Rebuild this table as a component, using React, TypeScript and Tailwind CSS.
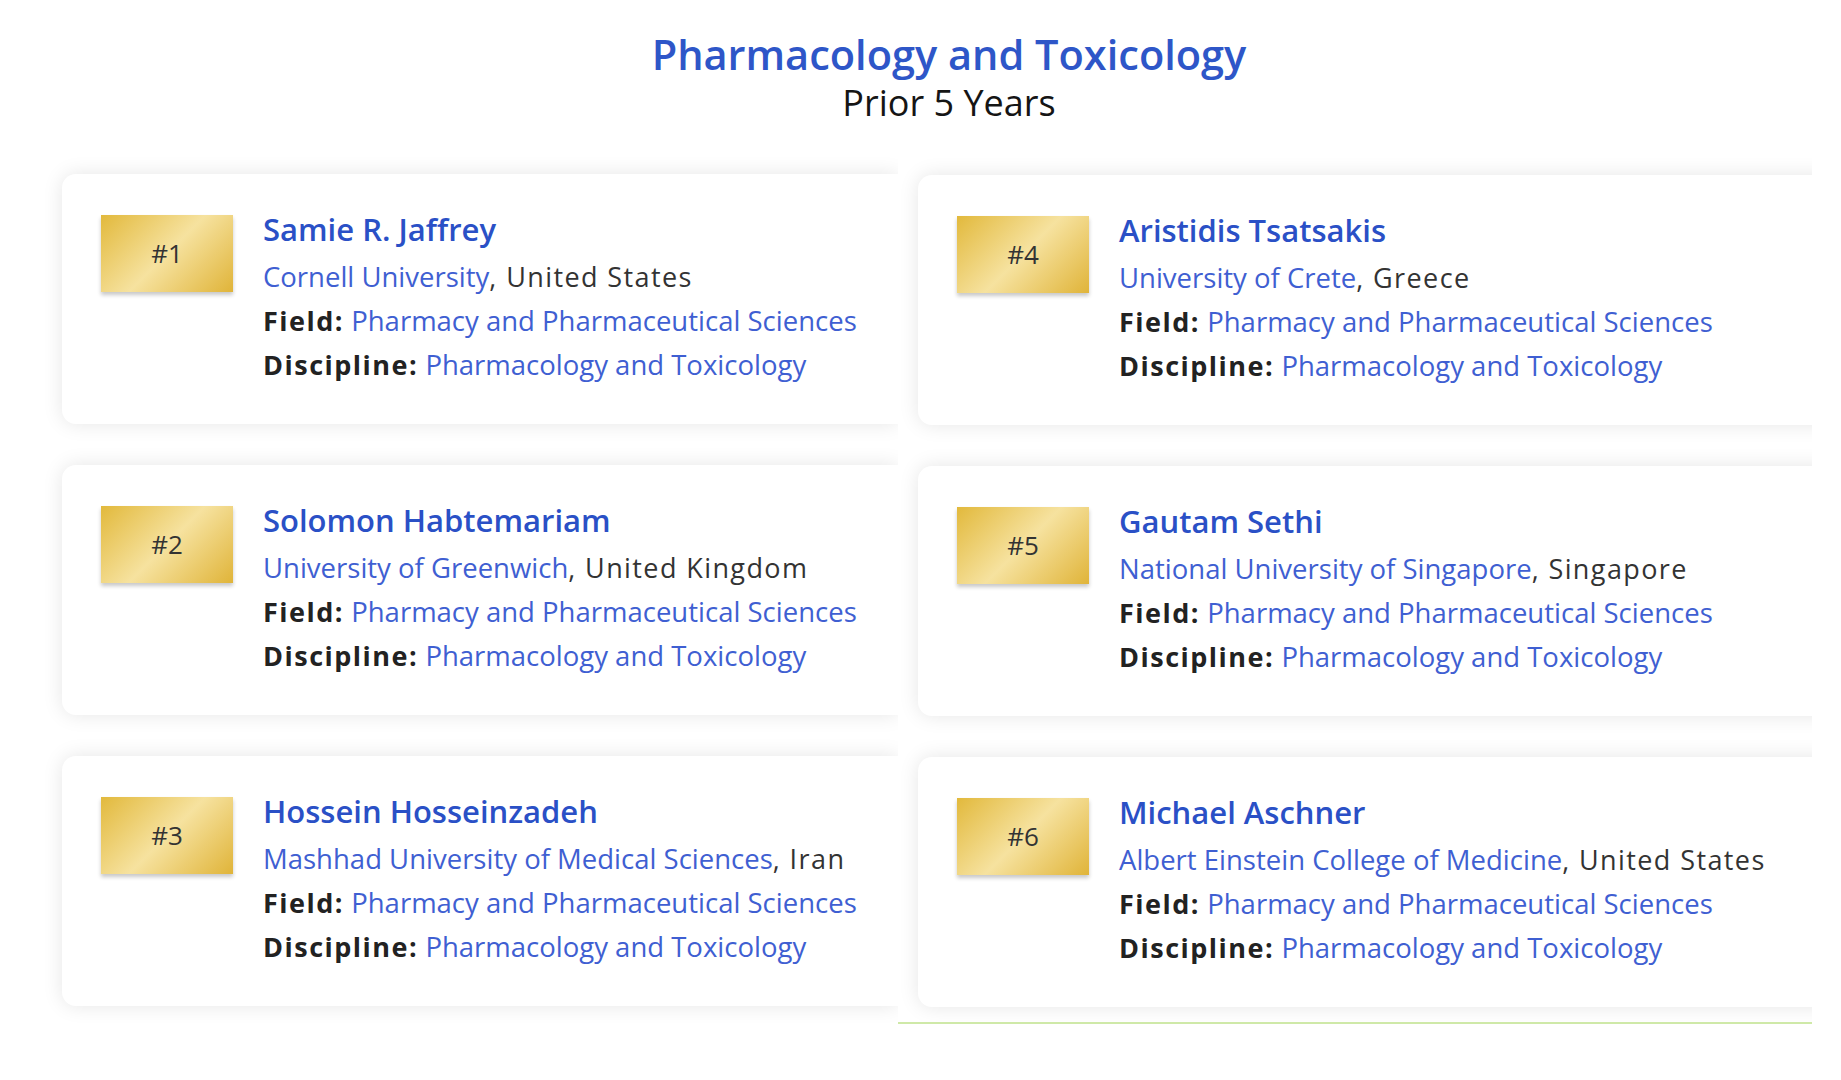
import React from "react";

type Item = { rank: number; name: string; uni: string; country: string };

const left: Item[] = [
  { rank: 1, name: "Samie R. Jaffrey", uni: "Cornell University", country: "United States" },
  { rank: 2, name: "Solomon Habtemariam", uni: "University of Greenwich", country: "United Kingdom" },
  { rank: 3, name: "Hossein Hosseinzadeh", uni: "Mashhad University of Medical Sciences", country: "Iran" },
];
const right: Item[] = [
  { rank: 4, name: "Aristidis Tsatsakis", uni: "University of Crete", country: "Greece" },
  { rank: 5, name: "Gautam Sethi", uni: "National University of Singapore", country: "Singapore" },
  { rank: 6, name: "Michael Aschner", uni: "Albert Einstein College of Medicine", country: "United States" },
];

function Card({ item, wide }: { item: Item; wide?: boolean }) {
  return (
    <div
      className={
        "flex h-[250px] shrink-0 rounded-l-[14px] bg-white shadow-[0_0_20px_rgba(0,0,0,0.1)] " +
        (wide ? "w-[1000px]" : "w-[836px]")
      }
    >
      <div className="pl-[39px] pt-[41px]">
        <div className="flex h-[77px] w-[132px] items-center justify-center bg-[linear-gradient(135deg,#e2b93c_0%,#f6e29f_50%,#e0b439_100%)] text-[26px] text-[#333] shadow-[0_3px_4px_rgba(0,0,0,0.22)]">
          #{item.rank}
        </div>
      </div>
      <div className="pl-[30px] pt-[35px]">
        <div className="h-[41px] whitespace-nowrap text-[31px] font-semibold leading-[41px] text-[#2a50c6]">
          {item.name}
        </div>
        <div className="mt-[5px] h-[44px] whitespace-nowrap text-[27.5px] leading-[44px]">
          <span className="text-[#3f5fd2]">{item.uni}</span>
          <span className="text-[27px] tracking-[1.4px] text-[#333]">, {item.country}</span>
        </div>
        <div className="h-[44px] whitespace-nowrap text-[27.5px] leading-[44px]">
          <span className="text-[27px] font-bold tracking-[1.5px] text-[#222]">Field:</span>{" "}
          <span className="text-[#3f5fd2]">Pharmacy and Pharmaceutical Sciences</span>
        </div>
        <div className="h-[44px] whitespace-nowrap text-[27.5px] leading-[44px]">
          <span className="text-[27px] font-bold tracking-[1.5px] text-[#222]">Discipline:</span>{" "}
          <span className="text-[#3f5fd2]">Pharmacology and Toxicology</span>
        </div>
      </div>
    </div>
  );
}

export default function App() {
  return (
    <div className="min-h-screen w-full bg-white font-['Open_Sans',sans-serif]">
      <div className="ml-[62px] w-[1774px] pt-[30px] text-center">
        <h1 className="text-[41.5px] font-semibold leading-[48px] text-[#2e56c8]">Pharmacology and Toxicology</h1>
        <h2 className="mt-[3px] text-[36px] font-medium leading-[44px] text-[#151515]">Prior 5 Years</h2>
      </div>
      <div className="mt-[33px] flex pl-[62px]">
        <div className="flex w-[836px] flex-col gap-[41px] pt-[16px]">
          {left.map((it) => (
            <Card key={it.rank} item={it} />
          ))}
        </div>
        <div className="flex w-[914px] flex-col gap-[41px] overflow-hidden border-b-2 border-[#cfe9a8] bg-white pb-[15px] pl-[20px] pt-[17px]">
          {right.map((it) => (
            <Card key={it.rank} item={it} wide />
          ))}
        </div>
      </div>
    </div>
  );
}
